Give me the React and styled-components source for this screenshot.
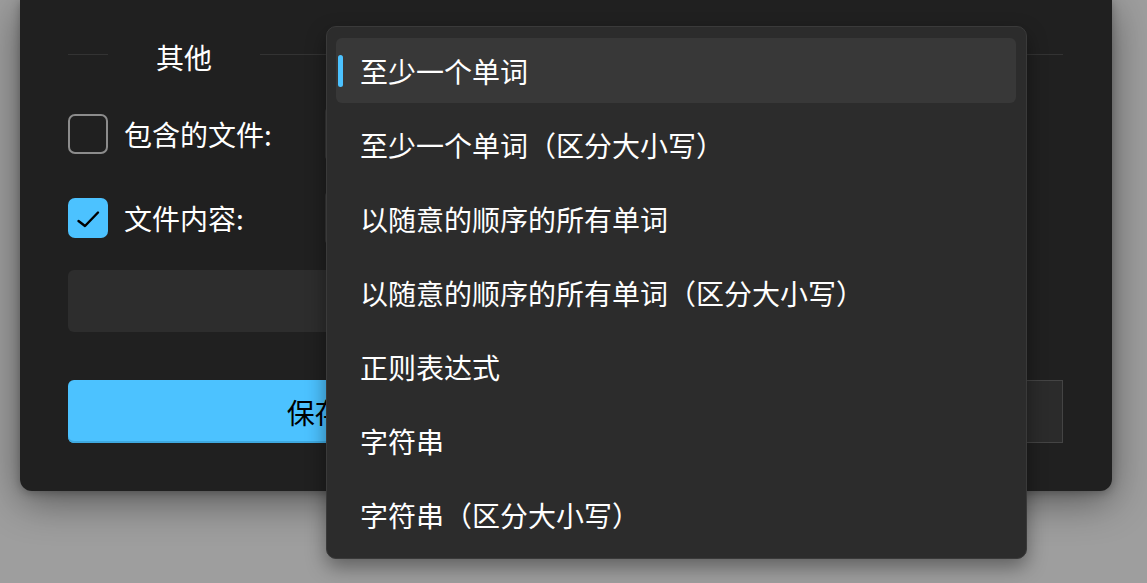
import React from "react";
import styled, { createGlobalStyle } from "styled-components";

const Global = createGlobalStyle`
  html, body { margin: 0; padding: 0; }
  body {
    background: #9e9e9e;
    font-family: "Noto Sans CJK SC", "Noto Sans", sans-serif;
    overflow: hidden;
  }
  #root { width: 1147px; height: 583px; position: relative; overflow: hidden; }
`;

const Page = styled.div`
  width: 1147px;
  height: 583px;
  padding-left: 20px;
  box-sizing: border-box;
`;

const Dialog = styled.div`
  width: 1092px;
  box-sizing: border-box;
  background: #202020;
  border-radius: 0 0 12px 12px;
  box-shadow: 0 10px 40px rgba(0, 0, 0, 0.45), 0 2px 10px rgba(0, 0, 0, 0.25);
  padding: 34px 49px 48px 48px;
  display: flex;
  flex-direction: column;
  color: #fff;
`;

const Separator = styled.div`
  display: flex;
  align-items: center;
  height: 40px;
`;

const SepLine = styled.div`
  height: 1px;
  background: #333333;
  width: ${(p) => (p.$grow ? "auto" : "40px")};
  flex: ${(p) => (p.$grow ? "1" : "none")};
`;

const SepText = styled.span`
  font-size: 28px;
  line-height: 40px;
  padding: 0 48px;
  margin-top: 6px;
`;

const Row = styled.div`
  display: grid;
  grid-template-columns: 257px 702px;
  align-items: center;
  height: 56px;
  margin-top: ${(p) => p.$mt}px;
`;

const CheckLabel = styled.label`
  display: flex;
  align-items: center;
  gap: 16px;
  font-size: 28px;
  line-height: 1;
`;

const Box = styled.span`
  width: 40px;
  height: 40px;
  box-sizing: border-box;
  border-radius: 7px;
  display: flex;
  align-items: center;
  justify-content: center;
  background: ${(p) => (p.$checked ? "#4cc2ff" : "transparent")};
  border: ${(p) => (p.$checked ? "none" : "2px solid #8c8c8c")};
`;

const Combo = styled.div`
  height: 56px;
  background: #2d2d2d;
  border-radius: 6px;
  border: 1px solid #353535;
  box-sizing: border-box;
`;

const TextInput = styled.div`
  width: 959px;
  height: 62px;
  margin-top: 24px;
  background: #2d2d2d;
  border-radius: 6px;
  box-sizing: border-box;
`;

const Buttons = styled.div`
  display: grid;
  grid-template-columns: 1fr 1fr;
  gap: 8px;
  margin-top: 48px;
  height: 63px;
`;

const Button = styled.button`
  height: 63px;
  border-radius: ${(p) => (p.$primary ? "6px" : "0")};
  border: ${(p) => (p.$primary ? "none" : "1.5px solid #444444")};
  background: ${(p) => (p.$primary ? "#4cc2ff" : "#2b2b2b")};
  color: ${(p) => (p.$primary ? "#000" : "#fff")};
  font-family: "Noto Sans CJK SC", sans-serif;
  font-size: 28px;
  box-shadow: ${(p) => (p.$primary ? "inset 0 -2px 0 #3fa9e0" : "none")};
`;

const Popup = styled.div`
  position: absolute;
  left: 326px;
  top: 26px;
  width: 701px;
  height: 533px;
  box-sizing: border-box;
  background: #2c2c2c;
  border: 1px solid #3a3a3a;
  border-radius: 10px;
  box-shadow: 0 8px 20px rgba(0, 0, 0, 0.4);
  padding: 11px 10px 0 9px;
  display: flex;
  flex-direction: column;
  gap: 9px;
`;

const Item = styled.div`
  position: relative;
  height: 65px;
  border-radius: 6px;
  background: ${(p) => (p.$selected ? "#383838" : "transparent")};
  display: flex;
  align-items: center;
  padding-left: 24px;
  font-size: 28px;
  color: #ffffff;
  white-space: nowrap;
`;

const Indicator = styled.span`
  position: absolute;
  left: 2px;
  top: 17px;
  width: 5px;
  height: 32px;
  border-radius: 3px;
  background: #4cc2ff;
`;

const options = [
  "至少一个单词",
  "至少一个单词（区分大小写）",
  "以随意的顺序的所有单词",
  "以随意的顺序的所有单词（区分大小写）",
  "正则表达式",
  "字符串",
  "字符串（区分大小写）",
];

function Check() {
  return (
    <svg width="40" height="40" viewBox="0 0 40 40">
      <polyline
        points="10.5,23 17,28 30,14.5"
        fill="none"
        stroke="#000"
        strokeWidth="2.4"
        strokeLinecap="round"
        strokeLinejoin="round"
      />
    </svg>
  );
}

export default function App() {
  return (
    <>
      <Global />
      <Page>
        <Dialog>
          <Separator>
            <SepLine />
            <SepText>其他</SepText>
            <SepLine $grow />
          </Separator>
          <Row $mt={32}>
            <CheckLabel>
              <Box />
              包含的文件:
            </CheckLabel>
            <Combo />
          </Row>
          <Row $mt={28}>
            <CheckLabel>
              <Box $checked>
                <Check />
              </Box>
              文件内容:
            </CheckLabel>
            <Combo />
          </Row>
          <TextInput />
          <Buttons>
            <Button $primary>保存</Button>
            <Button>取消</Button>
          </Buttons>
        </Dialog>
      </Page>
      <Popup>
        {options.map((o, i) => (
          <Item key={o} $selected={i === 0}>
            {i === 0 && <Indicator />}
            {o}
          </Item>
        ))}
      </Popup>
    </>
  );
}
